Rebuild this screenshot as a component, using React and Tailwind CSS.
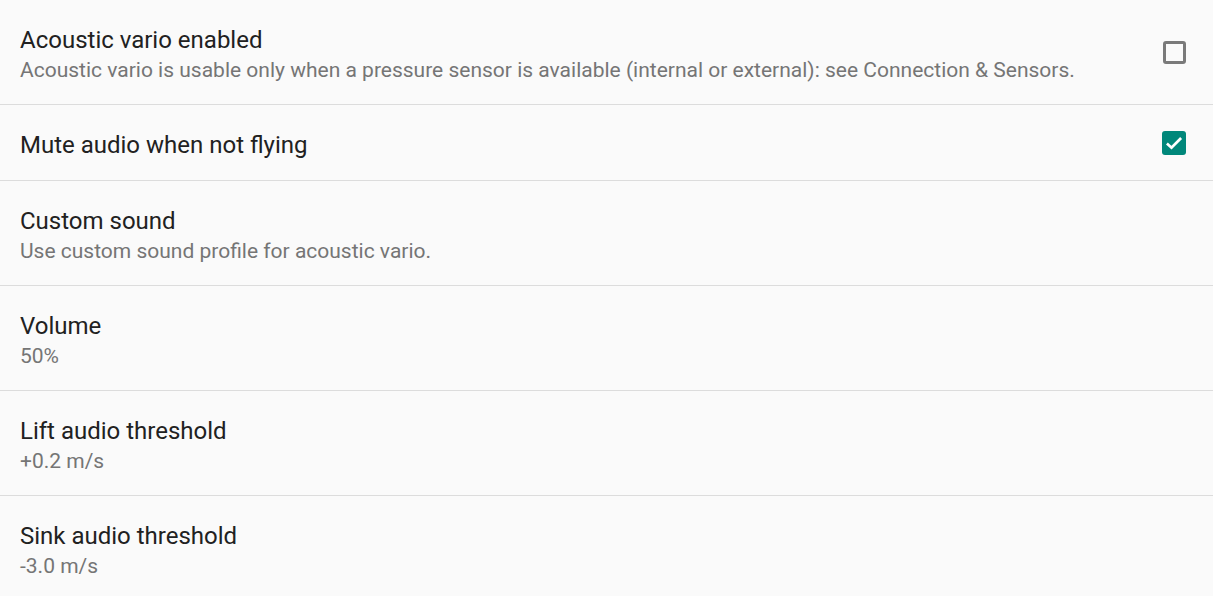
import React from "react";

const rows = [
  {
    title: "Acoustic vario enabled",
    summary:
      "Acoustic vario is usable only when a pressure sensor is available (internal or external): see Connection & Sensors.",
    check: false,
  },
  { title: "Mute audio when not flying", check: true },
  { title: "Custom sound", summary: "Use custom sound profile for acoustic vario." },
  { title: "Volume", summary: "50%" },
  { title: "Lift audio threshold", summary: "+0.2 m/s" },
  { title: "Sink audio threshold", summary: "-3.0 m/s" },
];

function Checkbox({ checked }) {
  if (checked) {
    return (
      <div className="w-[24px] h-[24px] rounded-[3px] bg-[#00877a] flex items-center justify-center">
        <svg width="20" height="20" viewBox="0 0 24 24" fill="none">
          <path d="M3.5 12.5l5.5 5.2L20.5 6" stroke="white" strokeWidth="3.2" />
        </svg>
      </div>
    );
  }
  return <div className="w-[23px] h-[23px] rounded-[3px] border-[3px] border-[#7a7a7a]" />;
}

export default function App() {
  return (
    <div
      className="w-[1213px] h-[596px] overflow-hidden bg-[#fafafa]"
      style={{ fontFamily: "Roboto, 'Noto Sans', sans-serif" }}
    >
      {rows.map((r, i) => (
        <div key={i} className="flex items-center border-b border-[#dcdcdc] pl-5 pr-[27px]">
          <div className={r.summary ? "flex-1 pt-[26px] pb-[19px]" : "flex-1 pt-[26px] pb-[20px]"}>
            <div className="text-[24px] leading-[29px] text-[#212121]">{r.title}</div>
            {r.summary && (
              <div className="text-[21px] leading-[30px] text-[#757575]">{r.summary}</div>
            )}
          </div>
          {r.check !== undefined && <Checkbox checked={r.check} />}
        </div>
      ))}
    </div>
  );
}
